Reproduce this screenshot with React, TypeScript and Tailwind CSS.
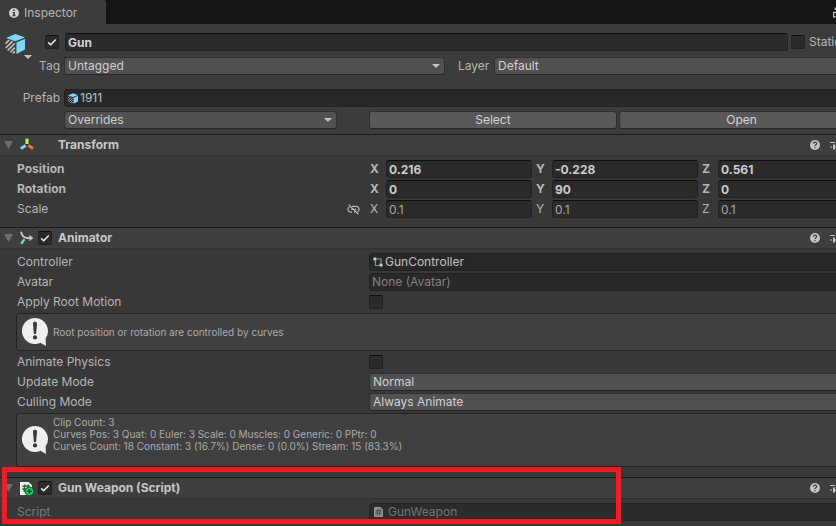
import React from 'react';
import clsx from 'clsx';

const fieldClass =
  'h-[18px] min-w-0 rounded-[3px] border border-[#212121] border-t-[#0d0d0d] bg-[#2a2a2a] px-0.5 text-xs outline-none';

const Checkbox = ({ label, checked = false }: { label: string; checked?: boolean }) => (
  <span className="relative block h-3.5 w-3.5 shrink-0">
    <input
      type="checkbox"
      aria-label={label}
      defaultChecked={checked}
      className="peer block h-3.5 w-3.5 appearance-none rounded-[2px] border border-[#212121] border-t-[#0d0d0d] bg-[#2a2a2a]"
    />
    <svg viewBox="0 0 14 14" className="pointer-events-none absolute inset-0 hidden h-3.5 w-3.5 peer-checked:block">
      <path d="M3.2 7.4 5.7 9.8 10.8 4.4" fill="none" stroke="#eeeeee" strokeWidth="1.5" />
    </svg>
  </span>
);

const Dropdown = ({ label, value, className }: { label: string; value: string; className?: string }) => (
  <div className={clsx('relative min-w-0', className)}>
    <select
      aria-label={label}
      defaultValue={value}
      className="block h-[18px] w-full appearance-none rounded-[3px] border border-[#303030] border-b-[#242424] bg-[#515151] px-[3px] text-xs leading-4 text-[#d0d0d0] outline-none"
    >
      <option>{value}</option>
    </select>
    <svg viewBox="0 0 8 4" className="pointer-events-none absolute top-[7px] right-[5px] h-1 w-2">
      <path d="M0 0h8L4 4z" fill="#c4c4c4" />
    </svg>
  </div>
);

const ObjectField = ({
  value,
  icon,
  muted,
}: {
  value: string;
  icon?: React.ReactNode;
  muted?: boolean;
}) => (
  <button
    type="button"
    className={clsx(
      'flex h-[18px] min-w-0 flex-1 items-center gap-px rounded-[3px] border border-[#212121] bg-[#282828] px-0.5 text-left text-xs leading-4',
      muted ? 'text-[#838383]' : 'text-[#c0c0c0]'
    )}
  >
    {icon}
    {value}
  </button>
);

const CubeIcon = ({ className }: { className: string }) => (
  <svg viewBox="0 0 22 22" className={className}>
    <path d="M1 4.8 11 .6l10 3.6-10 4z" fill="#7fd6fd" />
    <path d="M12 9.5 21 5.6v11.2l-9 4.6z" fill="#7fd6fd" />
    <path
      d="M.6 10.6 4.4 6.8M.8 15.2 8 8M2.8 17.8l7.6-7.6M5.6 19.6l4.8-4.8M8.4 20.8l2-2"
      stroke="#c4c4c4"
      strokeWidth="1.7"
      fill="none"
    />
  </svg>
);

const TransformIcon = () => (
  <svg viewBox="0 0 14 14" className="h-3.5 w-3.5" fill="none">
    <path d="M7 .6V6" stroke="#b4f04a" strokeWidth="3.2" />
    <path d="M5.6 7.6.9 10.6" stroke="#84d4fa" strokeWidth="3" />
    <path d="M8.4 7.6l4.7 3" stroke="#fa6e42" strokeWidth="3" />
  </svg>
);

const AnimatorIcon = () => (
  <svg viewBox="0 0 14 14" className="h-3.5 w-3.5" fill="none">
    <path d="M1 .8C1.8 4.8 4 7 7.6 7H11" stroke="#c4c4c4" strokeWidth="1.8" />
    <path d="M9.4 3.8 13.4 7 9.4 10.2z" fill="#c4c4c4" />
    <path d="M4.6 8.4C3 9.6 2 11 1.7 13" stroke="#63e2c2" strokeWidth="2.4" />
  </svg>
);

const ScriptIcon = () => (
  <svg viewBox="0 0 14 15" className="h-[15px] w-3.5" fill="none">
    <path d="M0 1h8.6L12 4.2V14H0z" fill="#eeeeee" />
    <path d="M5 3.4 4 10.8M8.2 3.4 7.6 8M2.4 5.2h7.4M2.2 8h4.6" stroke="#2b6a3a" strokeWidth="1.4" />
    <circle cx="9.4" cy="10.4" r="4.4" fill="#14c864" stroke="#1c3325" strokeWidth=".8" />
    <path d="M9.4 8v4.8M7 10.4h4.8" stroke="#173d26" strokeWidth="1.3" />
  </svg>
);

const SmallScriptIcon = () => (
  <svg viewBox="0 0 12 12" className="mr-0.5 ml-px h-3 w-3 shrink-0" fill="none">
    <path d="M1 1h6.5L10 3.4V11H1z" fill="#a8a8a8" />
    <path d="M4.6 2.8 4.2 9.2M7 2.8l-.4 6.4M2.6 4.8H8.6M2.4 7.2h6" stroke="#48684e" strokeWidth="1.2" />
  </svg>
);

const ControllerIcon = () => (
  <svg viewBox="0 0 12 12" className="h-3 w-3 shrink-0" fill="none">
    <path d="M5 3h4v4M3.5 5v4.5H7" stroke="#4fb89e" strokeWidth="1.1" />
    <path d="M1.5 1.5h3v3h-3zM7.5 7.5h3v3h-3z" fill="#d2d2d2" />
  </svg>
);

const UnlinkIcon = () => (
  <svg viewBox="0 0 13 11" className="block h-[11px] w-[13px]" fill="none" stroke="#bcbcbc" strokeWidth="1.2">
    <path d="M5 8.2H3.6a2.8 2.8 0 0 1-1.2-5.2M5 2.4h4.6a2.9 2.9 0 0 1 1 5.4M8 8.2H7M4.2 5.3h1.4M7.6 5.3h1.6M1.6.6l9.8 9.6" />
  </svg>
);

const Foldout = ({ label }: { label: string }) => (
  <button type="button" aria-label={`Toggle ${label}`} className="h-2 w-[9px]">
    <svg viewBox="0 0 9 8" className="block h-2 w-[9px]">
      <path d="M0 0h9L4.5 8z" fill="#6e6e6e" />
    </svg>
  </button>
);

const HeaderActions = () => (
  <div className="flex w-[58px] shrink-0 items-center gap-2.5">
    <button type="button" aria-label="Help">
      <svg viewBox="0 0 10 10" className="block h-2.5 w-2.5">
        <circle cx="5" cy="5" r="5" fill="#c4c4c4" />
        <path d="M3.4 3.7c.1-2 3.3-2 3.3 0C6.7 4.9 5 4.8 5 6.1" fill="none" stroke="#3e3e3e" strokeWidth="1.2" />
        <path d="M4.4 7h1.2v1.2H4.4z" fill="#3e3e3e" />
      </svg>
    </button>
    <button type="button" aria-label="Presets">
      <svg viewBox="0 0 12 10" className="block h-2.5 w-3" fill="none" stroke="#c4c4c4" strokeWidth="1.2">
        <path d="M0 2.5h5M7.5 2.5H12M0 7h2M3 7h9" />
        <path d="M4 4.4V9.6" strokeWidth="2" />
      </svg>
    </button>
  </div>
);

type SectionProps = {
  title: string;
  icon: React.ReactNode;
  toggle?: boolean;
  className?: string;
  children: React.ReactNode;
};

const Section = ({ title, icon, toggle, className, children }: SectionProps) => (
  <section>
    <header className="flex h-[22px] items-center border-t border-b border-t-[#1a1a1a] border-b-[#303030] bg-[#3e3e3e] pl-1">
      <Foldout label={title} />
      <span className="ml-[7px] w-[18px]">{icon}</span>
      <span className="w-5">{toggle && <Checkbox label={title} checked />}</span>
      <h2 className="flex-1 text-xs leading-4 font-bold text-[#c8c8c8]">{title}</h2>
      <HeaderActions />
    </header>
    <div className={clsx('flex flex-col gap-0.5 pt-1 pr-1 pl-4', className)}>{children}</div>
  </section>
);

const Row = ({ label, className, children }: { label: string; className?: string; children: React.ReactNode }) => (
  <div className={clsx('flex h-[18px] items-center pl-px text-xs leading-4', className)}>
    <span className="w-[352px] shrink-0">{label}</span>
    {children}
  </div>
);

const VectorRow = ({ label, values, modified }: { label: string; values: string[]; modified?: boolean }) => (
  <div className={clsx('flex h-[18px] items-center pl-px text-xs leading-4', modified && 'font-bold')}>
    <span className="flex w-[353px] shrink-0 items-center justify-between pr-2.5">
      {label}
      {!modified && (
        <button type="button" aria-label="Constrain proportions">
          <UnlinkIcon />
        </button>
      )}
    </span>
    <div className="flex min-w-0 flex-1 gap-1">
      {['X', 'Y', 'Z'].map((axis, i) => (
        <label key={axis} className="flex min-w-0 flex-1 items-center">
          <span className="w-4 shrink-0">{axis}</span>
          <input
            type="text"
            defaultValue={values[i]}
            className={clsx(fieldClass, 'w-full flex-1', modified ? 'text-[#cccccc]' : 'text-[#a8a8a8]')}
          />
        </label>
      ))}
    </div>
  </div>
);

const HelpBox = ({ className, children }: { className: string; children: React.ReactNode }) => (
  <div
    className={clsx(
      'flex gap-1 rounded-[3px] border border-[#232323] bg-[#404040] pl-1 text-[10px] leading-3 text-[#acacac]',
      className
    )}
  >
    <svg viewBox="0 0 28 30" className="h-[30px] w-7 shrink-0 self-center">
      <path d="M14 1a13 13 0 1 0 5.4 24.8L25 29l-.4-7.6A13 13 0 0 0 14 1z" fill="#eeeeee" />
      <path d="M12 6.6c0-2.4 4-2.4 4 0l-.8 9.4c-.2 1.6-2.2 1.6-2.4 0z" fill="#383838" />
      <circle cx="14" cy="20.4" r="2.1" fill="#383838" />
    </svg>
    {children}
  </div>
);

const ObjectHeader = () => (
  <div className="flex bg-[#3c3c3c] pt-[9px] pr-1 pb-[5px] text-xs leading-4">
    <div className="flex w-8 shrink-0 flex-col items-start pl-[5px]">
      <CubeIcon className="h-[22px] w-[21px]" />
      <svg viewBox="0 0 8 4" className="ml-[19px] h-1 w-2">
        <path d="M0 0h8L4 4z" fill="#c4c4c4" />
      </svg>
    </div>
    <div className="flex min-w-0 flex-1 flex-col">
      <div className="flex items-center">
        <div className="flex w-8 pl-[13px]">
          <Checkbox label="Active" checked />
        </div>
        <input
          type="text"
          aria-label="Name"
          defaultValue="Gun"
          className={clsx(fieldClass, 'ml-px flex-1 font-bold text-[#d2d2d2]')}
        />
        <div className="flex w-[76px] items-center gap-1 pl-[3px]">
          <Checkbox label="Static" />
          <span>Static</span>
        </div>
      </div>
      <div className="mt-1.5 flex items-center">
        <span className="w-7 text-right">Tag</span>
        <Dropdown label="Tag" value="Untagged" className="ml-1 flex-[381_1_0%]" />
        <span className="w-[49px] pl-[13px]">Layer</span>
        <Dropdown label="Layer" value="Default" className="flex-[370_1_0%]" />
      </div>
      <div className="mt-3.5 flex items-center">
        <span className="-ml-3 w-10 text-right">Prefab</span>
        <div className="ml-1 flex min-w-0 flex-1">
          <ObjectField value="1911" icon={<CubeIcon className="h-[11px] w-3 shrink-0" />} />
        </div>
      </div>
      <div className="mt-1 flex pl-8">
        <Dropdown label="Overrides" value="Overrides" className="mr-8 flex-[274_1_0%]" />
        <button
          type="button"
          className="mr-0.5 h-[18px] flex-[248_1_0%] rounded-[3px] border border-[#303030] border-b-[#242424] bg-[#585858] leading-4 text-[#d6d6d6]"
        >
          Select
        </button>
        <button
          type="button"
          className="h-[18px] flex-[244_1_0%] rounded-[3px] border border-[#303030] border-b-[#242424] bg-[#585858] leading-4 text-[#d6d6d6]"
        >
          Open
        </button>
      </div>
    </div>
  </div>
);

const App = () => {
  return (
    <div className="min-h-screen overflow-hidden bg-[#383838] font-['Inter',sans-serif] text-[#b6b6b6]">
      {/* The panel runs past the right edge of the window */}
      <main className="-mr-8">
        <nav className="flex h-6 items-start justify-between bg-[#151515] pr-6">
          <button
            type="button"
            className="flex h-6 w-[106px] items-center gap-[5px] rounded-tr-[2px] bg-[#3c3c3c] pt-0.5 pl-[9px] text-xs leading-4"
          >
            <svg viewBox="0 0 10 10" className="h-2.5 w-2.5">
              <circle cx="5" cy="5" r="5" fill="#d0d0d0" />
              <path d="M4.2 1.5h1.7v1.4H4.2zM3.6 4h2.3v3.2h.7v1H3.5v-1h.7V5h-.6z" fill="#3c3c3c" />
            </svg>
            Inspector
          </button>
          <button type="button" aria-label="Lock" className="mt-[7px] mr-0.5">
            <svg viewBox="0 0 9 11" className="h-[11px] w-[9px]" fill="none" stroke="#c4c4c4" strokeWidth="1.2">
              <path d="M.6 5.4h7.8v4.4H.6zM2.2 3V1.2h4.6v4" />
            </svg>
          </button>
        </nav>

        <ObjectHeader />

        <Section title="Transform" icon={<TransformIcon />} className="pb-[9px]">
          <VectorRow label="Position" values={['0.216', '-0.228', '0.561']} modified />
          <VectorRow label="Rotation" values={['0', '90', '0']} modified />
          <VectorRow label="Scale" values={['0.1', '0.1', '0.1']} />
        </Section>

        <Section title="Animator" icon={<AnimatorIcon />} toggle className="pb-2.5">
          <Row label="Controller">
            <ObjectField value="GunController" icon={<ControllerIcon />} />
          </Row>
          <Row label="Avatar">
            <ObjectField value="None (Avatar)" muted />
          </Row>
          <Row label="Apply Root Motion">
            <Checkbox label="Apply Root Motion" />
          </Row>
          <HelpBox className="h-[38px] items-center">
            <p>Root position or rotation are controlled by curves</p>
          </HelpBox>
          <Row label="Animate Physics">
            <Checkbox label="Animate Physics" />
          </Row>
          <Row label="Update Mode">
            <Dropdown label="Update Mode" value="Normal" className="flex-1" />
          </Row>
          <Row label="Culling Mode">
            <Dropdown label="Culling Mode" value="Always Animate" className="flex-1" />
          </Row>
          <HelpBox className="h-[54px] items-start">
            <p className="pt-0.5">
              Clip Count: 3<br />
              Curves Pos: 3 Quat: 0 Euler: 3 Scale: 0 Muscles: 0 Generic: 0 PPtr: 0<br />
              Curves Count: 18 Constant: 3 (16.7%) Dense: 0 (0.0%) Stream: 15 (83.3%)
            </p>
          </HelpBox>
        </Section>

        <div className="relative">
          <Section title="Gun Weapon (Script)" icon={<ScriptIcon />} toggle className="pb-1">
            <Row label="Script" className="text-[#7a7a7a]">
              <div className="flex min-w-0 flex-1 opacity-80">
                <ObjectField value="GunWeapon" icon={<SmallScriptIcon />} muted />
              </div>
            </Row>
          </Section>
          {/* Highlight around the script component */}
          <div className="pointer-events-none absolute -top-2.5 left-0.5 h-[57px] w-[619px] border-[5px] border-[#ee1c25]"></div>
        </div>
      </main>
    </div>
  );
};

export default App;
